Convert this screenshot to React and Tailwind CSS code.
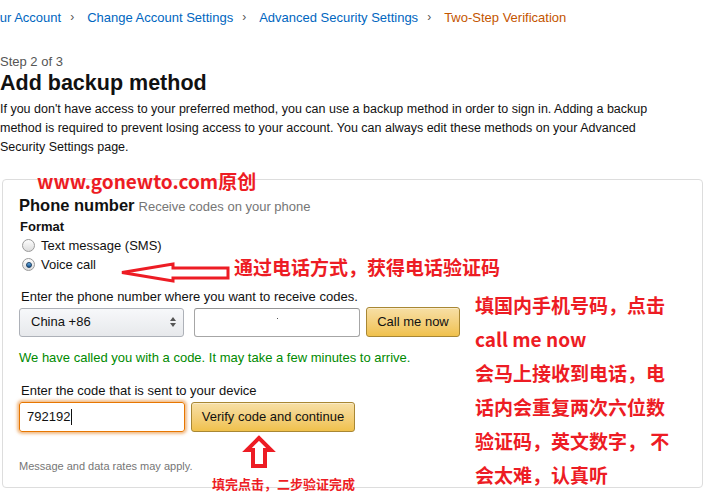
const RED = 'text-[#ed1c24]';

function Radio({ checked }) {
  return (
    <span className="relative inline-block w-[13px] h-[13px] rounded-full border border-[#9a9a9a] bg-gradient-to-b from-[#fdfdfd] to-[#dcdcdc] shrink-0">
      {checked && (
        <span className="absolute left-[2.5px] top-[2.5px] w-[6px] h-[6px] rounded-full bg-gradient-to-b from-[#6fb4e8] to-[#0d4f8c] border border-[#1c3f63]" />
      )}
    </span>
  );
}

function YellowButton({ children, width }) {
  return (
    <button className={`${width} h-[30px] rounded-[3px] border border-[#a88734] bg-gradient-to-b from-[#f7dfa5] to-[#f0c14b] text-[13px] text-[#111] shadow-[inset_0_1px_0_rgba(255,255,255,0.4)]`}>
      {children}
    </button>
  );
}

export default function App() {
  return (
    <div className="relative w-[704px] h-[494px] overflow-hidden bg-white font-['Liberation_Sans',Arial,sans-serif] text-[13px] text-[#111]">
      <div className="pt-[8px] ml-[-15px] flex items-center leading-[19px] whitespace-nowrap">
        <span className="text-[#0066c0]">Your Account</span>
        <span className="ml-[9px] mr-[13px] text-[#555] text-[12px]">›</span>
        <span className="text-[#0066c0]">Change Account Settings</span>
        <span className="ml-[9px] mr-[13px] text-[#555] text-[12px]">›</span>
        <span className="text-[#0066c0]">Advanced Security Settings</span>
        <span className="ml-[9px] mr-[13px] text-[#555] text-[12px]">›</span>
        <span className="text-[#c45500]">Two-Step Verification</span>
      </div>

      <div className="mt-[25px] leading-[19px] text-[#555]">Step 2 of 3</div>
      <h1 className="text-[21.5px] leading-[24px] font-bold text-[#111]">Add backup method</h1>
      <p className="mt-[5px] w-[680px] text-[12.5px] leading-[19px]">
        If you don't have access to your preferred method, you can use a backup method in order to sign in. Adding a backup method is required to prevent losing access to your account. You can always edit these methods on your Advanced Security Settings page.
      </p>

      {/* card */}
      <div className="mt-[22px] ml-[2px] w-[701px] h-[309px] border border-[#dddddd] rounded-[4px] pt-[15px] pl-[16px]">
        <div className="flex items-baseline leading-[20px]">
          <span className="text-[16.5px] font-bold">Phone number</span>
          <span className="ml-[4px] text-[#767676]">Receive codes on your phone</span>
        </div>
        <div className="font-bold leading-[19px] pl-[1px]">Format</div>
        <div className="flex items-center gap-[6px] h-[19px] pl-[3px]">
          <Radio />
          <span>Text message (SMS)</span>
        </div>
        <div className="flex items-center gap-[6px] h-[19px] pl-[3px]">
          <Radio checked />
          <span>Voice call</span>
        </div>

        <div className="mt-[13px] leading-[19px] pl-[2px]">Enter the phone number where you want to receive codes.</div>
        <div className="mt-[1px] flex items-center">
          <div className="w-[165px] h-[29px] rounded-[3px] border border-[#adb1b8] bg-gradient-to-b from-[#f7f8fa] to-[#e7e9ec] flex items-center justify-between pl-[11px] pr-[7px]">
            <span>China +86</span>
            <svg width="6" height="10" viewBox="0 0 6 10">
              <path d="M3 0 L6 4 L0 4 Z M0 6 L6 6 L3 10 Z" fill="#555" />
            </svg>
          </div>
          <div className="ml-[10px] w-[166px] h-[29px] rounded-[3px] border border-[#a6a6a6] border-t-[#949494] relative">
            <span className="absolute left-[82px] top-[9px] w-[1px] h-[1px] bg-[#555]" />
          </div>
          <div className="ml-[6px]">
            <YellowButton width="w-[94px]">Call me now</YellowButton>
          </div>
        </div>

        <div className="mt-[11px] leading-[19px] text-[#008a00]">We have called you with a code. It may take a few minutes to arrive.</div>

        <div className="mt-[14px] leading-[19px] pl-[2px]">Enter the code that is sent to your device</div>
        <div className="mt-[2px] flex items-center">
          <div className="w-[166px] h-[30px] rounded-[3px] border border-[#e77600] shadow-[0_0_3px_2px_rgba(228,121,17,0.5)] flex items-center pl-[7px]">
            <span>792192</span>
            <span className="ml-[1px] w-[1px] h-[16px] bg-[#111]" />
          </div>
          <div className="ml-[6px]">
            <YellowButton width="w-[164px]">Verify code and continue</YellowButton>
          </div>
        </div>

        <div className="mt-[27px] text-[11px] leading-[15px] text-[#767676]">Message and data rates may apply.</div>
      </div>

      {/* annotations drawn over the page */}
      <div className={`absolute left-[37px] top-[168px] ${RED} font-['Noto_Sans_CJK_SC',sans-serif] font-bold text-[19px] leading-[26px] whitespace-nowrap`}>
        www.gonewto.com原创
      </div>
      <div className={`absolute left-[234px] top-[255px] ${RED} font-['Noto_Sans_CJK_SC',sans-serif] font-bold text-[19px] leading-[24px] whitespace-nowrap`}>
        通过电话方式，获得电话验证码
      </div>
      <div className={`absolute left-[475px] top-[288px] w-[210px] ${RED} font-['Noto_Sans_CJK_SC',sans-serif] font-bold text-[19px] leading-[34px]`}>
        <div>填国内手机号码，点击</div>
        <div>call me now</div>
        <div>会马上接收到电话，电</div>
        <div>话内会重复两次六位数</div>
        <div>验证码，英文数字， 不</div>
        <div>会太难，认真听</div>
      </div>
      <div className={`absolute left-[212px] top-[475px] ${RED} font-['Noto_Sans_CJK_SC',sans-serif] font-bold text-[13px] leading-[18px] whitespace-nowrap`}>
        填完点击，二步验证完成
      </div>

      <svg className="absolute left-0 top-0" width="704" height="494" viewBox="0 0 704 494">
        <polygon
          points="122,272.5 173,264 173,268 228,268 228,278 173,278 173,281"
          fill="white"
          stroke="#ed1c24"
          strokeWidth="3"
          strokeLinejoin="miter"
        />
        <polygon
          points="259,438 247,450 253,450 253,466 265,466 265,450 271,450"
          fill="white"
          stroke="#ed1c24"
          strokeWidth="4"
          strokeLinejoin="miter"
        />
      </svg>
    </div>
  );
}
